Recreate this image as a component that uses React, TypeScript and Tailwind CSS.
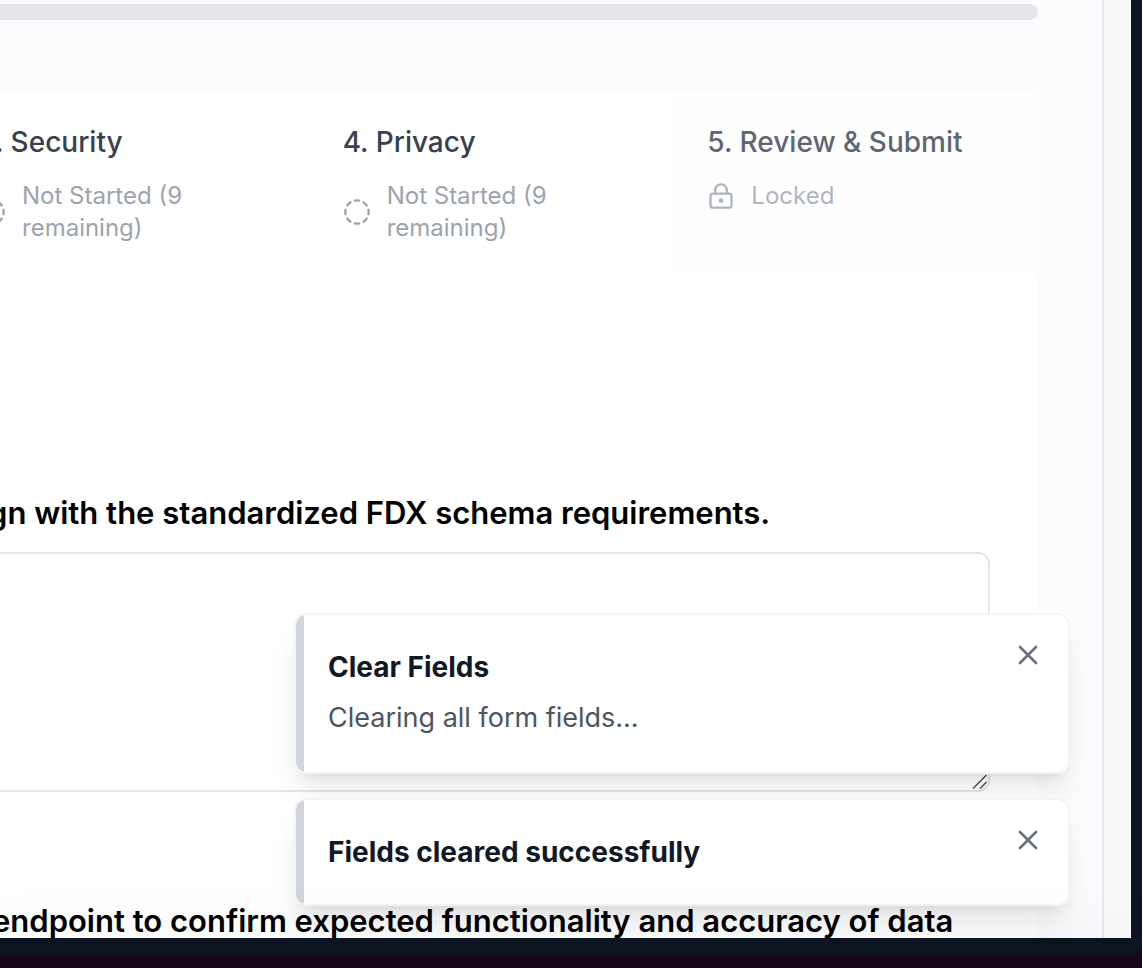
import { CircleDashed, LockKeyhole, X } from "lucide-react";

type Step = { title: string; status: string; locked?: boolean };

const steps: Step[] = [
  { title: "3. Security", status: "Not Started (9 remaining)" },
  { title: "4. Privacy", status: "Not Started (9 remaining)" },
  { title: "5. Review & Submit", status: "Locked", locked: true },
];

const toasts = [
  { title: "Clear Fields", description: "Clearing all form fields..." },
  { title: "Fields cleared successfully" },
];

function StepCard({ step }: { step: Step }) {
  const Icon = step.locked ? LockKeyhole : CircleDashed;
  return (
    <li
      className={
        step.locked
          ? "bg-[#fefefe] px-[34px] py-[30px] opacity-80"
          : "bg-white px-[34px] py-[30px]"
      }
    >
      <h2 className="text-[28px] leading-10 font-medium text-[#374151]">{step.title}</h2>
      <div className="mt-[18px] flex items-center gap-4 text-[#9ca3af]">
        <Icon className="size-7 shrink-0" strokeWidth={2} />
        <p className="w-44 text-2xl leading-8">{step.status}</p>
      </div>
    </li>
  );
}

function Toast({ title, description }: { title: string; description?: string }) {
  return (
    <div
      role="status"
      className="flex overflow-hidden rounded-xl border-2 border-[#f3f4f5] bg-white shadow-[0_20px_30px_-6px_rgba(0,0,0,0.1),0_8px_12px_-8px_rgba(0,0,0,0.1)]"
    >
      <div className="w-2 shrink-0 bg-[#d1d5da]" />
      <div className="flex-1 px-6 py-8">
        <p className="text-[28px] leading-10 font-bold text-[#111827]">{title}</p>
        {description && (
          <p className="mt-[9px] text-[27px] leading-11 text-[#4b5563]">{description}</p>
        )}
      </div>
      <button type="button" aria-label="Close" className="self-start p-6 text-[#6b7280]">
        <X className="size-8" strokeWidth={2} />
      </button>
    </div>
  );
}

export default function App() {
  return (
    <div className="relative flex h-screen flex-col overflow-hidden bg-[#180a1a] font-['Inter',sans-serif] [font-optical-sizing:none]">
      <div className="flex min-h-0 flex-1 flex-col rounded-br-lg bg-[#0d1421] pr-[11px]">
        <div className="flex min-h-0 flex-1 bg-[#fafafa] pr-[27px]">
          <main className="min-w-0 flex-1 overflow-hidden border-r-2 border-gray-200 bg-[#fbfcfe] pt-1 pr-16">
            <div
              role="progressbar"
              aria-label="Progress"
              aria-valuenow={0}
              className="h-4 rounded-r-full bg-gray-200"
            />
            <section className="mt-[72px] bg-white">
              <ol className="-ml-14 grid grid-cols-3">
                {steps.map((step) => (
                  <StepCard key={step.title} step={step} />
                ))}
              </ol>
              <div className="mt-[215px] pr-12">
                <label
                  htmlFor="schema"
                  className="-ml-[46px] block text-[31px] leading-12 font-semibold whitespace-nowrap text-black"
                >
                  align with the standardized FDX schema requirements.
                </label>
                <div className="relative mt-[15px]">
                  <textarea
                    id="schema"
                    className="block h-60 w-full resize-none rounded-r-xl border-2 border-l-0 border-[#e1e6eb] bg-white p-4 text-2xl"
                  />
                  <svg
                    aria-hidden="true"
                    viewBox="0 0 16 16"
                    className="absolute right-0.5 bottom-0.5 size-4 fill-none stroke-neutral-600"
                    strokeWidth="1.5"
                  >
                    <path d="M1 14.500 14.500 1M8 14.500 14.500 8" />
                  </svg>
                </div>
                <p className="mt-[105px] -ml-2 text-[31px] leading-12 font-semibold whitespace-nowrap text-black">
                  endpoint to confirm expected functionality and accuracy of data
                </p>
              </div>
            </section>
          </main>
        </div>
        <div className="relative z-20 -mr-[11px] h-4 shrink-0 rounded-br-lg bg-[#0d1421] shadow-[0_0_60px_rgba(0,0,0,0.1)]" />
      </div>
      <div className="h-3.5 shrink-0" />
      <div className="absolute right-18 bottom-[62px] z-10 flex w-[776px] max-w-full flex-col gap-6">
        {toasts.map((toast) => (
          <Toast key={toast.title} {...toast} />
        ))}
      </div>
    </div>
  );
}
